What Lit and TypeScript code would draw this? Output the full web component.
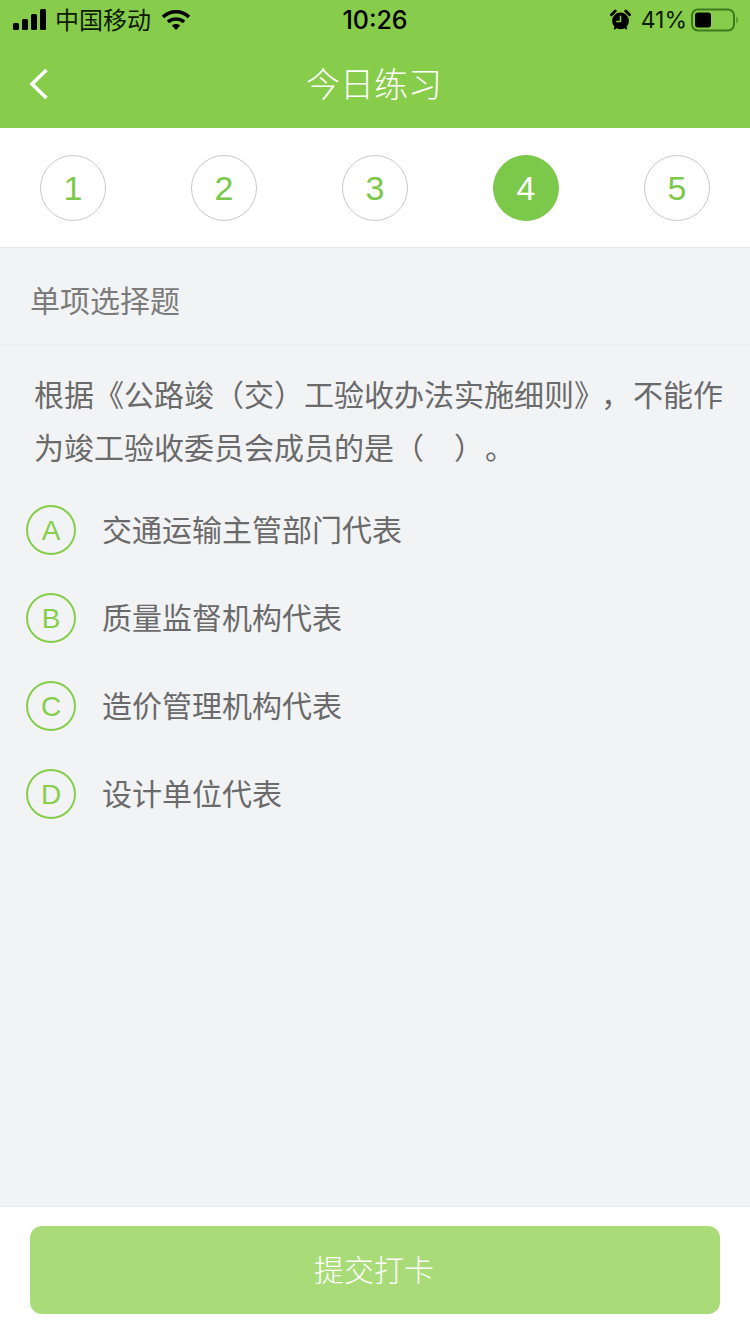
import { LitElement, html, css } from 'lit';
import { customElement } from 'lit/decorators.js';

const steps = [1, 2, 3, 4, 5];
const options = [
  { key: 'A', text: '交通运输主管部门代表' },
  { key: 'B', text: '质量监督机构代表' },
  { key: 'C', text: '造价管理机构代表' },
  { key: 'D', text: '设计单位代表' },
];

@customElement('app-root')
export class AppRoot extends LitElement {
  static styles = css`
    :host {
      display: flex;
      flex-direction: column;
      width: 750px;
      height: 1334px;
      background: #f2f3f5;
      overflow: hidden;
      font-family: "Liberation Sans", "Noto Sans CJK SC", sans-serif;
    }
    .head {
      height: 128px;
      background: #87cc4a;
      flex: none;
    }
    .status {
      height: 40px;
      display: grid;
      grid-template-columns: 1fr auto 1fr;
      align-items: center;
      color: #0c1a04;
      font-size: 24px;
    }
    .status-left {
      display: flex;
      align-items: center;
      padding-left: 13px;
      gap: 8px;
    }
    .status-left span {
      padding-bottom: 4px;
    }
    .status-left .wifi {
      margin-left: 2px;
    }
    .time {
      font-family: Inter, sans-serif;
      font-size: 25px;
      font-weight: 500;
      color: #000;
    }
    .status-right {
      display: flex;
      align-items: center;
      justify-content: flex-end;
      padding-right: 11px;
      gap: 8px;
    }
    .pct {
      font-family: Inter, sans-serif;
      font-size: 23px;
      margin: 0 -4px 0 2px;
    }
    .nav {
      height: 88px;
      display: flex;
      align-items: center;
      justify-content: center;
      position: relative;
      padding: 0 2px 4px 0;
      box-sizing: border-box;
      color: #fff;
      font-size: 34px;
      font-weight: 300;
    }
    .back {
      position: absolute;
      left: 29px;
      top: 28px;
    }
    .steps {
      flex: none;
      height: 120px;
      box-sizing: border-box;
      padding: 27px 40px 0;
      display: flex;
      justify-content: space-between;
      background: #fff;
      border-bottom: 1px solid #e6e7e8;
    }
    .step {
      width: 66px;
      height: 66px;
      box-sizing: border-box;
      border: 1px solid #c9c9c9;
      border-radius: 50%;
      display: flex;
      align-items: center;
      justify-content: center;
      font-size: 34px;
      color: #7cc84a;
    }
    .step.on {
      background: #7cc84a;
      border-color: #7cc84a;
      color: #fff;
    }
    .type {
      flex: none;
      height: 98px;
      box-sizing: border-box;
      padding: 4px 0 0 30px;
      display: flex;
      align-items: center;
      border-bottom: 1px solid #e9ebed;
      font-size: 30px;
      color: #7b7b7b;
    }
    .main {
      flex: 1;
    }
    .question {
      padding: 23px 20px 0 34px;
      font-size: 30px;
      line-height: 53px;
      color: #6a6a6a;
      white-space: nowrap;
    }
    .comma {
      padding: 0 2px 0 12px;
    }
    .blank {
      display: inline-block;
      width: 30px;
    }
    .stop {
      margin-left: 16px;
    }
    .options {
      display: flex;
      flex-direction: column;
      padding: 30px 0 0 26px;
      gap: 38px;
    }
    .option {
      display: flex;
      align-items: center;
      gap: 26px;
      height: 50px;
      font-size: 30px;
      color: #6a6a6a;
    }
    .option span {
      padding-bottom: 4px;
    }
    .key {
      width: 50px;
      height: 50px;
      box-sizing: border-box;
      border: 2px solid #86ce4b;
      border-radius: 50%;
      display: flex;
      align-items: center;
      justify-content: center;
      padding-top: 2px;
      font-size: 28px;
      color: #86ce4b;
    }
    .foot {
      flex: none;
      height: 128px;
      box-sizing: border-box;
      padding: 19px 30px 0;
      background: #fff;
      border-top: 1px solid #e8e9ea;
    }
    .submit {
      height: 88px;
      box-sizing: border-box;
      padding: 0 2px 4px 0;
      border-radius: 12px;
      background: #a9dc78;
      color: #fff;
      font-size: 30px;
      font-weight: 300;
      display: flex;
      align-items: center;
      justify-content: center;
    }
  `;

  render() {
    return html`
      <div class="head">
        <div class="status">
          <div class="status-left">
            <svg width="34" height="22" viewBox="0 0 34 22" fill="#000">
              <rect x="0" y="14" width="6" height="7" rx="1.5" />
              <rect x="9" y="10" width="6" height="11" rx="1.5" />
              <rect x="18" y="5" width="6" height="16" rx="1.5" />
              <rect x="27" y="0" width="6" height="21" rx="1.5" />
            </svg>
            <span>中国移动</span>
            <svg class="wifi" width="30" height="22" viewBox="0 0 30 22" fill="none" stroke="#000" stroke-width="3.6">
              <path d="M2 8 C9 1 21 1 28 8" />
              <path d="M7 13 C11 9 19 9 23 13" />
              <path d="M15 21 L10.8 16.6 C13 14.6 17 14.6 19.2 16.6 Z" fill="#000" stroke="none" />
            </svg>
          </div>
          <div class="time">10:26</div>
          <div class="status-right">
            <svg width="21" height="22" viewBox="0 0 22 22">
              <circle cx="11" cy="12" r="8.8" fill="#000" />
              <path d="M1.5 5.5 L5.5 1.5 M16.5 1.5 L20.5 5.5" stroke="#000" stroke-width="3" stroke-linecap="round" />
              <path d="M4.5 20.5 L6 18.5 M17.5 20.5 L16 18.5" stroke="#000" stroke-width="2" />
              <path d="M11 6.5 V12.5 H6.5" fill="none" stroke="#87cc4a" stroke-width="1.6" />
            </svg>
            <span class="pct">41%</span>
            <svg width="48" height="24" viewBox="0 0 48 24">
              <rect x="1" y="1.5" width="42" height="21" rx="6" fill="none" stroke="#3f7a22" stroke-width="2" />
              <rect x="4" y="4.5" width="16" height="15" rx="3" fill="#000" />
              <path d="M45.5 8.5 C47 9.5 47 14.5 45.5 15.5 Z" fill="#3f7a22" />
            </svg>
          </div>
        </div>
        <div class="nav">
          <svg class="back" width="20" height="32" viewBox="0 0 20 32" fill="none" stroke="#fff" stroke-width="3.6">
            <path d="M17.5 2 L3 16 L17.5 30" />
          </svg>
          今日练习
        </div>
      </div>

      <div class="steps">
        ${steps.map((n) => html`<div class="step ${n === 4 ? 'on' : ''}">${n}</div>`)}
      </div>

      <div class="main">
        <div class="type">单项选择题</div>
        <div class="question">
          <div>根据《公路竣（交）工验收办法实施细则》<span class="comma">，</span>不能作</div>
          <div>为竣工验收委员会成员的是（<span class="blank"></span>）<span class="stop">。</span></div>
        </div>
        <div class="options">
          ${options.map(
            (o) => html`
              <div class="option">
                <div class="key">${o.key}</div>
                <span>${o.text}</span>
              </div>
            `
          )}
        </div>
      </div>

      <div class="foot">
        <div class="submit">提交打卡</div>
      </div>
    `;
  }
}
